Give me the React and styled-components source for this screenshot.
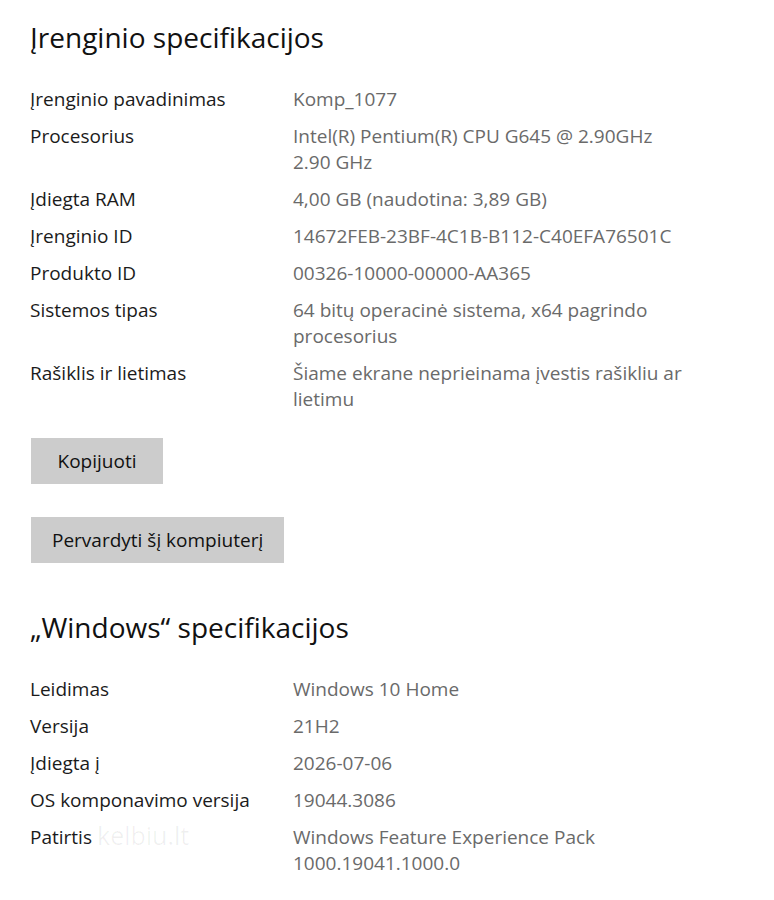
import React from "react";
import styled, { createGlobalStyle } from "styled-components";

const GlobalStyle = createGlobalStyle`
  html, body {
    margin: 0;
    padding: 0;
    background: #ffffff;
  }
  body {
    font-family: "Open Sans", "Noto Sans", "Liberation Sans", sans-serif;
    color: #000;
  }
`;

const Page = styled.div`
  position: relative;
  width: 774px;
  min-height: 900px;
  padding: 18px 0 0 30px;
  box-sizing: border-box;
`;

const Section = styled.section`
  display: flex;
  flex-direction: column;
`;

const Heading = styled.h2`
  margin: 0 0 ${(p) => p.$gap}px;
  font-size: 28px;
  font-weight: 400;
  line-height: 38px;
  color: #111;
`;

const SpecList = styled.dl`
  display: grid;
  grid-template-columns: 263px 400px;
  row-gap: 11px;
  margin: 0;
  font-size: 19px;
  line-height: 26px;
`;

const Label = styled.dt`
  margin: 0;
  color: #1b1b1b;
`;

const Value = styled.dd`
  margin: 0;
  color: #6a6a6a;
`;

const Actions = styled.div`
  display: flex;
  flex-direction: column;
  align-items: flex-start;
  gap: 33px;
  margin: 26px 0 45px 1px;
`;

const Button = styled.button`
  min-width: 132px;
  height: 46px;
  padding: 0 21px;
  border: none;
  background: #cccccc;
  font-family: inherit;
  font-size: 19px;
  color: #111;
`;

// faint site watermark; its first letter is hidden behind the "Patirtis" label
const Watermark = styled.span`
  position: absolute;
  left: 97px;
  top: 818px;
  font-size: 25px;
  line-height: 34px;
  color: rgba(0, 0, 0, 0.06);
  pointer-events: none;
`;

const device = [
  ["Įrenginio pavadinimas", "Komp_1077"],
  ["Procesorius", "Intel(R) Pentium(R) CPU G645 @ 2.90GHz 2.90 GHz"],
  ["Įdiegta RAM", "4,00 GB (naudotina: 3,89 GB)"],
  ["Įrenginio ID", "14672FEB-23BF-4C1B-B112-C40EFA76501C"],
  ["Produkto ID", "00326-10000-00000-AA365"],
  ["Sistemos tipas", "64 bitų operacinė sistema, x64 pagrindo procesorius"],
  ["Rašiklis ir lietimas", "Šiame ekrane neprieinama įvestis rašikliu ar lietimu"],
];

const windows = [
  ["Leidimas", "Windows 10 Home"],
  ["Versija", "21H2"],
  ["Įdiegta į", "2026-07-06"],
  ["OS komponavimo versija", "19044.3086"],
  ["Patirtis", "Windows Feature Experience Pack 1000.19041.1000.0"],
];

const Specs = ({ items }) => (
  <SpecList>
    {items.map(([label, value]) => (
      <React.Fragment key={label}>
        <Label>{label}</Label>
        <Value>{value}</Value>
      </React.Fragment>
    ))}
  </SpecList>
);

export default function App() {
  return (
    <>
      <GlobalStyle />
      <Page>
        <Section>
          <Heading $gap={30}>Įrenginio specifikacijos</Heading>
          <Specs items={device} />
        </Section>
        <Actions>
          <Button>Kopijuoti</Button>
          <Button>Pervardyti šį kompiuterį</Button>
        </Actions>
        <Section>
          <Heading $gap={30}>„Windows“ specifikacijos</Heading>
          <Specs items={windows} />
        </Section>
        <Watermark>kelbiu.lt</Watermark>
      </Page>
    </>
  );
}
